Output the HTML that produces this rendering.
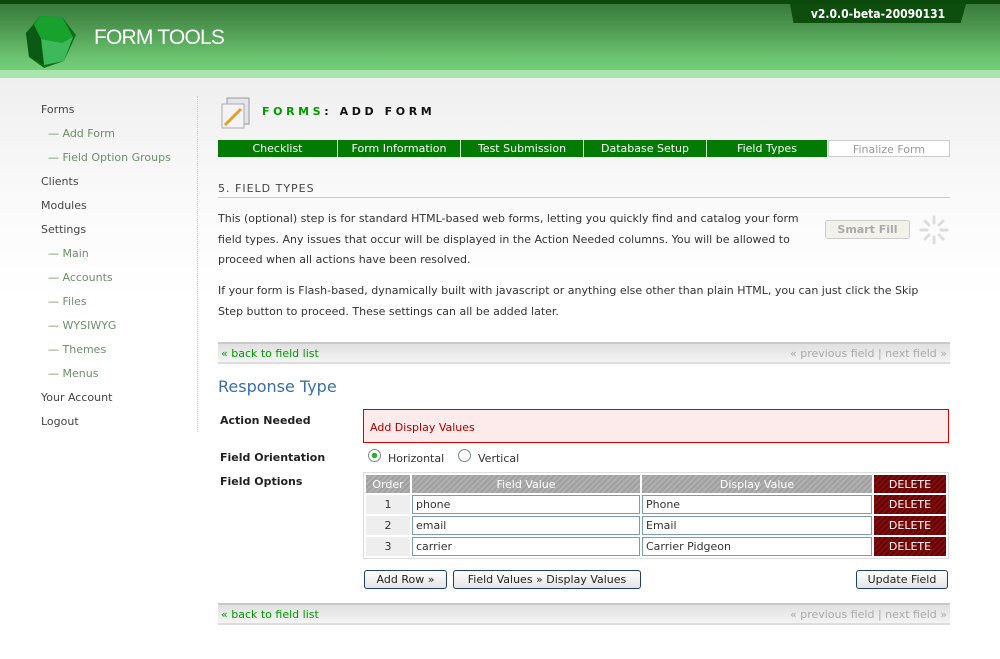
<!DOCTYPE html>
<html><head><meta charset="utf-8"><style>
*{margin:0;padding:0;box-sizing:border-box}
body{width:1000px;height:659px;overflow:hidden;font-family:Verdana,"DejaVu Sans",sans-serif;font-size:11px;color:#333;background:linear-gradient(#efefef 78px,#fafafa 200px,#fff 300px);position:relative}
.a{position:absolute}
#hdr{left:0;top:0;width:1000px;height:70px;background:linear-gradient(#3a7a3c 0,#4f9a52 25px,#6cc570 55px,#77d07c 70px);border-top:4px solid #0b4a0b}
#band{left:0;top:70px;width:1000px;height:8px;background:#a8e4ac}
#ver{left:790px;top:4px;width:176px;height:19px;background:#0d4d0d;clip-path:polygon(0 0,100% 0,97% 100%,2% 100%);color:#fff;font-family:"DejaVu Sans Condensed","Liberation Sans Narrow",sans-serif;font-weight:bold;font-size:12px;text-align:center;line-height:20px}
#logo{left:94px;top:26px;color:#fff;font-family:"Liberation Sans",sans-serif;font-size:21px;letter-spacing:-0.8px}
.nav div{position:absolute;left:41px;color:#444;font-size:11px}
.nav div.s{left:48px;color:#6b8f6b}
#div{left:197px;top:96px;height:336px;border-left:1px dotted #ccc}
.tab{position:absolute;top:140px;height:17px;background:#037a03;color:#fff;text-align:center;line-height:18px;border-right:1px solid #cfc}
p.t{position:absolute;left:218px;width:605px;line-height:20.5px;color:#333}
.bar{position:absolute;left:218px;width:732px;height:22px;background:linear-gradient(#e0e0e0,#f4f4f4);border-top:2px solid #c8c8c8;border-bottom:2px solid #ddd;line-height:20px;padding:0 3px}
.bar .l{color:#090}
.bar .r{float:right;color:#aaa}
.lbl{position:absolute;left:220px;font-weight:bold;color:#222}
table{position:absolute;left:363px;top:472px;width:586px;border-collapse:separate;border-spacing:2px;background:#fff;border:1px solid #ddd}
td{height:19px;text-align:center;color:#333}
th{height:18px;font-weight:normal;color:#fff;background:repeating-linear-gradient(135deg,#a0a0a0 0 2px,#b0b0b0 2px 4px)}
td.o{background:#eee}
td.i{border:1px solid #7a9cbc;text-align:left;padding-left:3px;background:#fff}
.del{background:repeating-linear-gradient(135deg,#6a0000 0 2px,#7a1010 2px 4px)!important;color:#fff}
.btn{position:absolute;top:570px;height:19px;border:1px solid #1c3f6b;border-radius:3px;background:linear-gradient(#fff,#e4e4e4);color:#222;line-height:18px;text-align:center}
</style></head><body>
<div id="hdr" class="a"></div><div id="band" class="a"></div>
<div id="ver" class="a">v2.0.0-beta-20090131</div>
<svg class="a" style="left:24px;top:13px" width="56" height="62" viewBox="0 0 56 62"><polygon points="16,3 38,4 52,22 40,48 20,55 5,44 2,20" fill="#0e6e1a"/><polygon points="16,3 38,4 49,24 38,30 17,26 10,12" fill="#16a22c"/><polygon points="17,26 38,30 49,24 40,48 20,52" fill="#3db85a"/><polygon points="2,20 10,12 17,26 20,52 5,44" fill="#0a5a14"/></svg>
<div id="logo" class="a">FORM TOOLS</div>
<div class="nav">
<div style="top:103px">Forms</div>
<div class="s" style="top:127px">— Add Form</div>
<div class="s" style="top:151px">— Field Option Groups</div>
<div style="top:175px">Clients</div>
<div style="top:199px">Modules</div>
<div style="top:223px">Settings</div>
<div class="s" style="top:247px">— Main</div>
<div class="s" style="top:271px">— Accounts</div>
<div class="s" style="top:295px">— Files</div>
<div class="s" style="top:319px">— WYSIWYG</div>
<div class="s" style="top:343px">— Themes</div>
<div class="s" style="top:367px">— Menus</div>
<div style="top:391px">Your Account</div>
<div style="top:415px">Logout</div>
</div>
<div id="div" class="a"></div>
<svg class="a" style="left:219px;top:96px" width="34" height="34"><rect x="8" y="2" width="22" height="26" fill="#e4e4ec" stroke="#999"/><rect x="3" y="8" width="22" height="24" fill="#f4f4f8" stroke="#aaa"/><line x1="6" y1="29" x2="22" y2="13" stroke="#e0a020" stroke-width="3"/></svg>
<div class="a" style="left:262px;top:105px;font-weight:bold;font-size:11px;letter-spacing:3.6px;color:#111"><span style="color:#090">FORMS</span>: ADD FORM</div>
<div class="tab" style="left:218px;width:120px">Checklist</div>
<div class="tab" style="left:338px;width:123px">Form Information</div>
<div class="tab" style="left:461px;width:123px">Test Submission</div>
<div class="tab" style="left:584px;width:123px">Database Setup</div>
<div class="tab" style="left:707px;width:121px">Field Types</div>
<div class="tab" style="left:828px;width:122px;background:#fff;color:#999;border:1px solid #ccc">Finalize Form</div>
<div class="a" style="left:218px;top:182px;width:732px;height:16px;border-bottom:1px solid #ccc;letter-spacing:1px;color:#444">5. FIELD TYPES</div>
<p class="t" style="top:209px">This (optional) step is for standard HTML-based web forms, letting you quickly find and catalog your form field types. Any issues that occur will be displayed in the Action Needed columns. You will be allowed to proceed when all actions have been resolved.</p>
<div class="a" style="left:825px;top:220px;width:85px;height:19px;border:1px solid #ccc;border-radius:3px;background:#f2f2ea;color:#aaa;font-weight:bold;text-align:center;line-height:17px">Smart Fill</div>
<svg class="a" style="left:918px;top:214px" width="32" height="32" viewBox="-16 -16 32 32"><g stroke="#ddd" stroke-width="3" stroke-linecap="round"><line x1="0" y1="-13" x2="0" y2="-7"/><line x1="0" y1="13" x2="0" y2="7"/><line x1="-13" y1="0" x2="-7" y2="0"/><line x1="13" y1="0" x2="7" y2="0"/><line x1="-9" y1="-9" x2="-5" y2="-5"/><line x1="9" y1="9" x2="5" y2="5"/><line x1="-9" y1="9" x2="-5" y2="5"/><line x1="9" y1="-9" x2="5" y2="-5"/></g></svg>
<p class="t" style="top:281px;width:724px">If your form is Flash-based, dynamically built with javascript or anything else other than plain HTML, you can just click the Skip Step button to proceed. These settings can all be added later.</p>
<div class="bar" style="top:342px"><span class="r">« previous field | next field »</span><span class="l">« back to field list</span></div>
<div class="a" style="left:218px;top:377px;font-size:16px;color:#3a6ea5">Response Type</div>
<div class="lbl" style="top:414px">Action Needed</div>
<div class="a" style="left:363px;top:409px;width:586px;height:34px;background:#fdeaea;border:1px solid #d00;color:#a00;padding:11px 6px">Add Display Values</div>
<div class="lbl" style="top:451px">Field Orientation</div>
<div class="a" style="left:368px;top:449px;width:13px;height:13px;border:1px solid #789;border-radius:50%;background:radial-gradient(#3a3 2.5px,#fff 3px)"></div>
<div class="a" style="left:388px;top:452px">Horizontal</div>
<div class="a" style="left:458px;top:449px;width:13px;height:13px;border:1px solid #789;border-radius:50%;background:#fff"></div>
<div class="a" style="left:478px;top:452px">Vertical</div>
<div class="lbl" style="top:475px">Field Options</div>
<table>
<tr><th style="width:44px">Order</th><th style="width:228px">Field Value</th><th style="width:230px">Display Value</th><th class="del">DELETE</th></tr>
<tr><td class="o">1</td><td class="i">phone</td><td class="i">Phone</td><td class="del">DELETE</td></tr>
<tr><td class="o">2</td><td class="i">email</td><td class="i">Email</td><td class="del">DELETE</td></tr>
<tr><td class="o">3</td><td class="i">carrier</td><td class="i">Carrier Pidgeon</td><td class="del">DELETE</td></tr>
</table>
<div class="btn" style="left:364px;width:83px">Add Row »</div>
<div class="btn" style="left:453px;width:188px">Field Values » Display Values</div>
<div class="btn" style="left:856px;width:92px">Update Field</div>
<div class="bar" style="top:603px"><span class="r">« previous field | next field »</span><span class="l">« back to field list</span></div>
</body></html>
